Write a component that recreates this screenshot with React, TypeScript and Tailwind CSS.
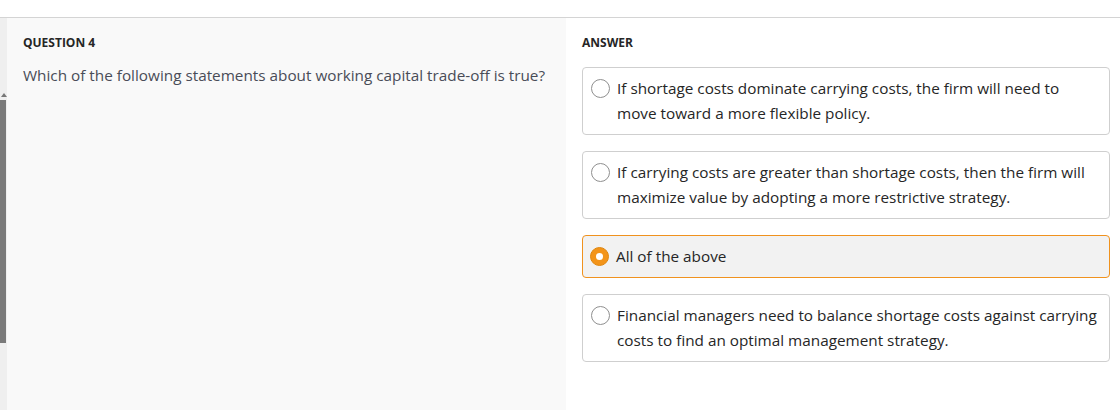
import React from "react";

const answers = [
  {
    id: "a",
    text: "If shortage costs dominate carrying costs, the firm will need to move toward a more flexible policy.",
  },
  {
    id: "b",
    text: "If carrying costs are greater than shortage costs, then the firm will maximize value by adopting a more restrictive strategy.",
  },
  { id: "c", text: "All of the above" },
  {
    id: "d",
    text: "Financial managers need to balance shortage costs against carrying costs to find an optimal management strategy.",
  },
];

function Radio({ checked }: { checked: boolean }) {
  if (checked) {
    return (
      <span className="mt-[3px] flex h-[19px] w-[19px] shrink-0 items-center justify-center rounded-full border border-[#e0870f] bg-[#f39419]">
        <span className="h-[7px] w-[7px] rounded-full bg-white" />
      </span>
    );
  }
  return (
    <span className="mt-[3px] h-[19px] w-[19px] shrink-0 rounded-full border border-[#8f8f8f] bg-white" />
  );
}

export default function App() {
  const selected = "c";

  return (
    <div
      className="h-[410px] w-[1120px] overflow-hidden bg-white text-[#333]"
      style={{ fontFamily: '"Open Sans", "Noto Sans", sans-serif' }}
    >
      {/* top bar */}
      <div className="h-[18px] border-b border-[#d4d4d4] bg-white" />

      <div className="flex h-[392px]">
        {/* scroll strip */}
        <div className="flex w-[7px] flex-col bg-[#efefef]">
          <div className="mt-[75px] ml-[1px] h-0 w-0 border-x-[3px] border-b-[4px] border-x-transparent border-b-[#777]" />
          <div className="mt-[3px] h-[243px] w-[6px] bg-[#7a7a7a]" />
        </div>

        {/* question */}
        <div className="w-[559px] bg-[#f9f9f9] pl-[16px] pt-[17px]">
          <h2 className="text-[12px] font-bold uppercase leading-[16px] text-[#262626]">
            Question 4
          </h2>
          <p className="mt-[13px] text-[15.3px] leading-[22px] text-[#494c57]">
            Which of the following statements about working capital trade-off is true?
          </p>
        </div>

        {/* answers */}
        <div className="flex-1 pl-[16px] pr-[10px] pt-[17px]">
          <h2 className="text-[12px] font-bold uppercase leading-[16px] text-[#262626]">
            Answer
          </h2>
          <div className="mt-[16px] flex flex-col gap-[16px]">
            {answers.map((a) => {
              const on = a.id === selected;
              return (
                <label
                  key={a.id}
                  className={
                    on
                      ? "flex gap-[7px] rounded-[4px] border border-[#f0921e] bg-[#f2f2f2] py-2 pl-[7px] pr-[10px]"
                      : "flex gap-[7px] rounded-[4px] border border-[#cfcfcf] bg-white py-2 pl-[8px] pr-[9px]"
                  }
                >
                  <Radio checked={on} />
                  <span className="text-[15.3px] leading-[25px] text-[#262626]">{a.text}</span>
                </label>
              );
            })}
          </div>
        </div>
      </div>
    </div>
  );
}
